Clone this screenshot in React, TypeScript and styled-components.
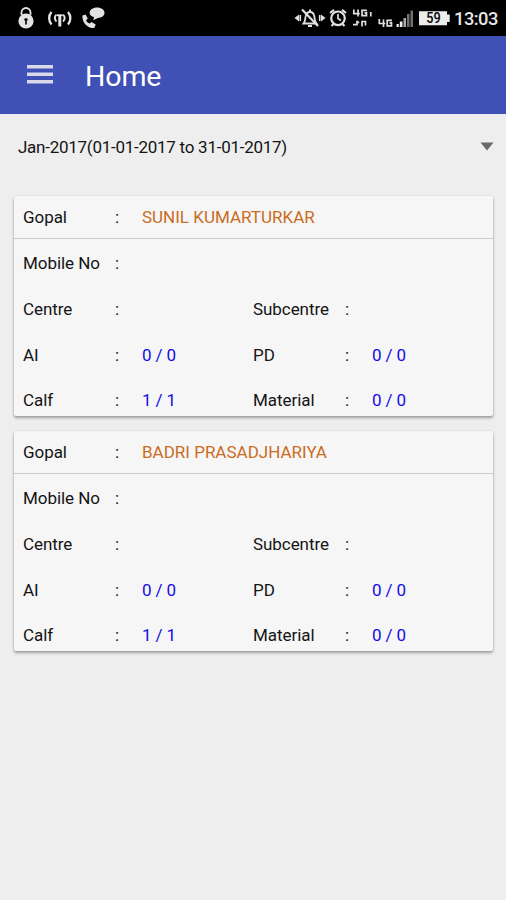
import React from "react";
import styled, { createGlobalStyle } from "styled-components";

const GlobalStyle = createGlobalStyle`
  * { box-sizing: border-box; }
  html, body { margin: 0; background: #eeeeee; }
  body { font-family: Roboto, "Liberation Sans", sans-serif; color: #141414; }
`;

const Screen = styled.div`
  width: 506px;
  height: 900px;
  overflow: hidden;
  background: #eeeeee;
`;

const StatusBar = styled.header`
  height: 36px;
  display: flex;
  justify-content: space-between;
  background: #000;
  color: #e8e8e8;
  svg { display: block; }
`;

const StatusGroup = styled.div`
  display: flex;
`;

const Clock = styled.time`
  width: 52px;
  font-size: 18.3px;
  font-weight: 500;
  line-height: 37px;
  letter-spacing: -0.5px;
  white-space: nowrap;
`;

const AppBar = styled.div`
  height: 78px;
  display: flex;
  align-items: center;
  padding: 3px 26px 0;
  background: #3f51b5;
  color: #fff;
`;

const MenuButton = styled.button`
  width: 28px;
  height: 28px;
  margin: 0 31px 5px 0;
  padding: 0;
  border: 0;
  background: none;
  svg { display: block; }
`;

const Title = styled.h1`
  margin: 0;
  font-size: 28.5px;
  font-weight: 400;
  letter-spacing: -0.1px;
`;

const PeriodPicker = styled.div`
  height: 65px;
  display: flex;
  align-items: center;
  justify-content: space-between;
  padding: 0 12px 0 18px;
  font-size: 17px;
`;

const PeriodText = styled.span`
  letter-spacing: -0.26px;
`;

const Arrow = styled.svg`
  display: block;
`;

const CardList = styled.main`
  display: flex;
  flex-direction: column;
  gap: 15px;
  padding: 17px 13px 0 14px;
`;

const Card = styled.section`
  height: 220px;
  border-radius: 2px;
  background: #f6f6f6;
  box-shadow: 0 2px 3px rgba(0, 0, 0, 0.32), 0 0 2px rgba(0, 0, 0, 0.12);
`;

const Row = styled.div<{ $header?: boolean }>`
  display: grid;
  grid-template-columns: 91px 28px 111px 91px 28px 1fr;
  align-items: center;
  height: ${(p) => (p.$header ? 43 : 45.7)}px;
  margin: ${(p) => (p.$header ? "0 -1px 1.4px" : "0")};
  padding-left: ${(p) => (p.$header ? 10 : 9)}px;
  border-bottom: ${(p) => (p.$header ? "1px solid #cccccc" : "0")};
  font-size: 17px;
  line-height: 20px;
  white-space: nowrap;
`;

const Label = styled.span`
  letter-spacing: -0.06px;
`;

const Colon = styled.span`
  padding-left: 1px;
`;

const Count = styled.span`
  color: #140ce4;
  letter-spacing: -0.15px;
`;

const PersonName = styled.span`
  grid-column: 3 / -1;
  color: #c96c22;
`;

type Person = { name: string; ai: string; pd: string; calf: string; material: string };

const people: Person[] = [
  { name: "SUNIL KUMARTURKAR", ai: "0 / 0", pd: "0 / 0", calf: "1 / 1", material: "0 / 0" },
  { name: "BADRI PRASADJHARIYA", ai: "0 / 0", pd: "0 / 0", calf: "1 / 1", material: "0 / 0" },
];

function Field({ label, value = "" }: { label: string; value?: string }) {
  return (
    <>
      <Label>{label}</Label>
      <Colon>:</Colon>
      <Count>{value}</Count>
    </>
  );
}

function PersonCard({ person }: { person: Person }) {
  return (
    <Card>
      <Row $header>
        <Label>Gopal</Label>
        <Colon>:</Colon>
        <PersonName>{person.name}</PersonName>
      </Row>
      <Row><Field label="Mobile No" /></Row>
      <Row><Field label="Centre" /><Field label="Subcentre" /></Row>
      <Row><Field label="AI" value={person.ai} /><Field label="PD" value={person.pd} /></Row>
      <Row><Field label="Calf" value={person.calf} /><Field label="Material" value={person.material} /></Row>
    </Card>
  );
}

function NotificationIcons() {
  return (
    <svg width="110" height="36" viewBox="0 0 110 36" fill="none" stroke="#e4e4e4">
      <path d="M21.5 15v-2.5a4.5 4.5 0 0 1 9 0V15" strokeWidth="1.8" />
      <circle cx="26" cy="21" r="7.6" fill="#e4e4e4" stroke="none" />
      <circle cx="26" cy="19.6" r="1.7" fill="#111" stroke="none" />
      <path d="M26 20v4.5" stroke="#111" strokeWidth="1.7" />
      <path d="M51.5 12a9.5 9.5 0 0 0 0 12.5M68 12a9.5 9.5 0 0 1 0 12.5" strokeWidth="2.3" />
      <path d="M56.5 21.5c-2.2-1.8-2.2-5.2 0-6.8M63 21.5c2.2-1.8 2.2-5.2 0-6.8" strokeWidth="2" />
      <path d="M59.8 15.5v11" strokeWidth="3" />
      <path d="M57 15.2h5.6" strokeWidth="1.8" />
      <path d="M82.5 15.5l3-1 2.3 4-1.8 1.7c1 1.9 2 2.7 3.7 3.3l1.8-1.5 4.2 2.5-1.3 3.2c-6.7 1.5-12.6-5.4-11.9-12.2z" fill="#e4e4e4" stroke="none" />
      <path d="M97 7.5c4.3 0 7.5 2.3 7.5 5.2s-3 5.2-6.7 5.2l-4.5 2.4.7-3.2c-2.8-.8-4.4-2.4-4.4-4.4 0-2.9 3.2-5.2 7.4-5.2z" fill="#e4e4e4" stroke="none" />
    </svg>
  );
}

function SystemIcons() {
  return (
    <svg width="160" height="36" viewBox="294 0 160 36" fill="none" stroke="#e0e0e0">
      <path d="M303.5 23.5h13c-1.8-2-1.8-4.5-2.2-7-.4-3-1.8-4.5-4.3-4.5s-4 1.5-4.4 4.5c-.3 2.5-.4 5-2.1 7z" strokeWidth="1.8" />
      <path d="M310 9.5v2M308 26h4" strokeWidth="2" />
      <path d="M302 9.5l16 16.5" strokeWidth="2.2" />
      <path d="M294.5 18l4.5-3.5v7zM325.5 18l-4.5-3.5v7z" fill="#e0e0e0" stroke="none" />
      <path d="M300.3 15v6M319.7 15v6" strokeWidth="1.6" />
      <circle cx="338" cy="18.3" r="6.8" strokeWidth="2.2" />
      <path d="M338 14v4.5l3 2" strokeWidth="1.7" />
      <path d="M330 13l4-3.2M346 13l-4-3.2M333.5 24l-2 2M342.5 24l2 2" strokeWidth="2.2" />
      <path d="M353.8 9.5v4.2h6M358 9.5v7M367 10.3h-5v5.3h4.5v-2.8h-2M370.8 12v4.5M353 24.7h4v-4M357 21l2 2M362 26.5v-5h3.5v4" strokeWidth="1.7" />
      <path d="M379.3 19v4.5h6M383.5 19.5v7.5M392 20.3h-4.8v5.5h4.3v-3h-2" strokeWidth="1.7" />
      <path d="M396.5 24h2.3v3h-2.3zM399.8 21.5h2.7V27h-2.7z" fill="#eee" stroke="none" />
      <path d="M403.5 18h2.5v9h-2.5z" fill="#aaa" stroke="none" />
      <path d="M407 14h2.5v13H407zM410.5 10.5h2.5V27h-2.5z" fill="#707070" stroke="none" />
      <path d="M419 11.2h28v3.2h2.7v7.6H447v3.2h-28z" fill="#ededed" stroke="none" />
      <text x="433.5" y="23.1" textAnchor="middle" textLength="14.5" lengthAdjust="spacingAndGlyphs" fontFamily="Roboto, sans-serif" fontSize="14" fontWeight="600" fill="#111" stroke="none">59</text>
    </svg>
  );
}

export default function App() {
  return (
    <>
      <GlobalStyle />
      <Screen>
        <StatusBar>
          <NotificationIcons />
          <StatusGroup>
            <SystemIcons />
            <Clock>13:03</Clock>
          </StatusGroup>
        </StatusBar>
        <AppBar>
          <MenuButton aria-label="Menu">
            <svg width="28" height="28" viewBox="0 0 28 28" fill="#d9d9ea">
              <path d="M1 5h26v3.4H1zM1 12.5h26v3.4H1zM1 20h26v3.4H1z" />
            </svg>
          </MenuButton>
          <Title>Home</Title>
        </AppBar>
        <PeriodPicker>
          <PeriodText>Jan-2017(01-01-2017 to 31-01-2017)</PeriodText>
          <Arrow width="14" height="9" viewBox="0 0 14 9"><path d="M.5.5h13L7 8.5z" fill="#696969" /></Arrow>
        </PeriodPicker>
        <CardList>
          {people.map((p) => <PersonCard key={p.name} person={p} />)}
        </CardList>
      </Screen>
    </>
  );
}
